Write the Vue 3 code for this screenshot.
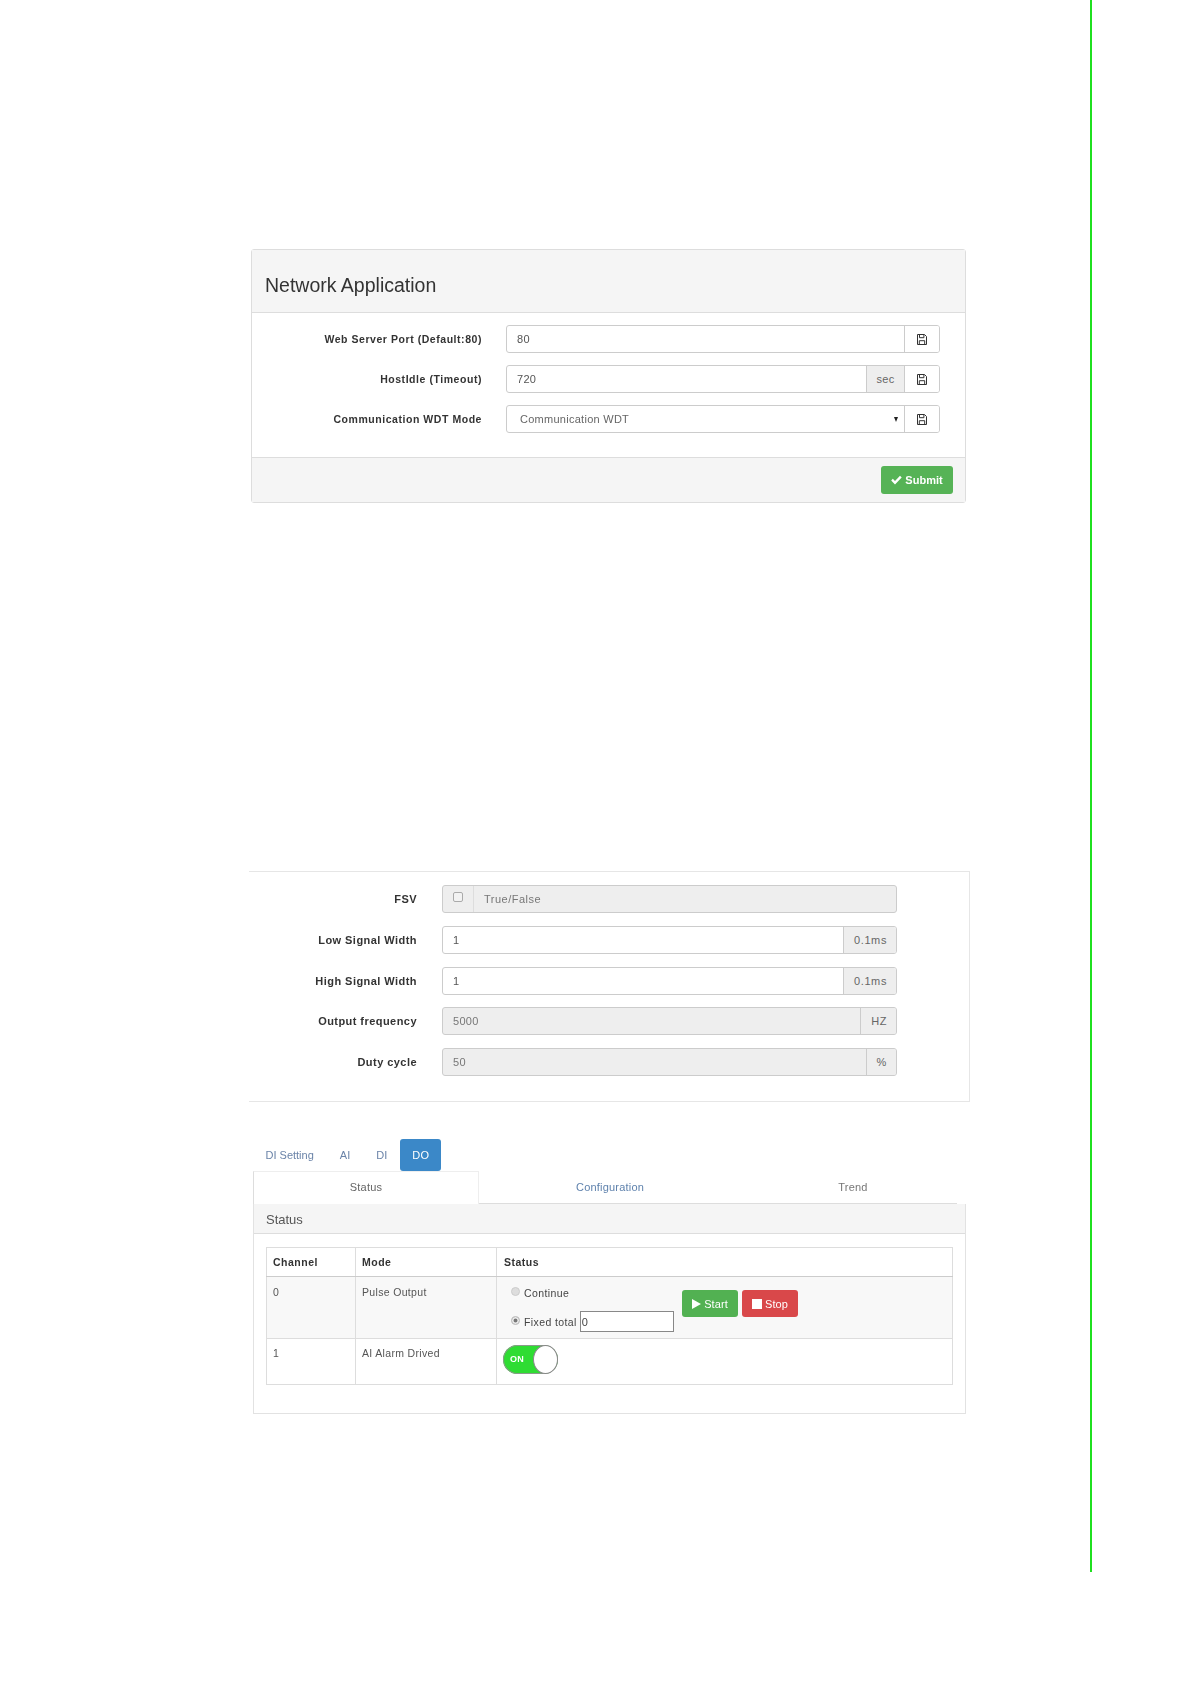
<script setup>
const networkRows = [
  { label: 'Web Server Port (Default:80)', value: '80' },
  { label: 'HostIdle (Timeout)', value: '720', unit: 'sec' },
  { label: 'Communication WDT Mode', select: 'Communication WDT' },
]
const signalRows = [
  { label: 'Low Signal Width', value: '1', unit: '0.1ms' },
  { label: 'High Signal Width', value: '1', unit: '0.1ms' },
  { label: 'Output frequency', value: '5000', unit: 'HZ', disabled: true },
  { label: 'Duty cycle', value: '50', unit: '%', disabled: true },
]
const topTabs = ['DI Setting', 'AI', 'DI', 'DO']
const subTabs = ['Status', 'Configuration', 'Trend']
</script>

<template>
  <div class="page">
    <main class="sheet">
      <section class="net-panel">
        <header class="net-head"><h2>Network Application</h2></header>
        <div class="net-body">
          <div v-for="row in networkRows" :key="row.label" class="net-row">
            <label class="field-label">{{ row.label }}</label>
            <div class="group">
              <div v-if="row.select" class="fake-select"><span>{{ row.select }}</span><i class="caret"></i></div>
              <input v-else class="field" :value="row.value" />
              <span v-if="row.unit" class="addon sec">{{ row.unit }}</span>
              <button class="save" type="button" aria-label="Save">
                <svg width="10" height="11" viewBox="0 0 10 11" fill="none" stroke="#333" stroke-width="1">
                  <path d="M.5.5h7l2 2v8H.5z" />
                  <path d="M2.5.7v3h4.4v-3M2.3 10.3V6.7h5.4v3.6" />
                </svg>
              </button>
            </div>
          </div>
        </div>
        <footer class="net-foot">
          <button class="btn ok" type="button">
            <svg width="11" height="10" viewBox="0 0 11 10"><path fill="#fff" d="M.2 5.4 1.8 3.8l2.2 2.2L9 .8l1.7 1.6L4 9.4z" /></svg>
            Submit
          </button>
        </footer>
      </section>

      <section class="signal-panel">
        <div class="signal-row">
          <label class="field-label">FSV</label>
          <div class="group muted">
            <span class="check-cell"><i class="check"></i></span>
            <span class="tf">True/False</span>
          </div>
        </div>
        <div v-for="row in signalRows" :key="row.label" class="signal-row">
          <label class="field-label">{{ row.label }}</label>
          <div class="group" :class="{ muted: row.disabled }">
            <input class="field" :value="row.value" :disabled="row.disabled" />
            <span class="addon end">{{ row.unit }}</span>
          </div>
        </div>
      </section>

      <nav class="pills">
        <a v-for="tab in topTabs" :key="tab" class="pill" :class="{ active: tab === 'DO' }">{{ tab }}</a>
      </nav>
      <nav class="sub-tabs">
        <a v-for="tab in subTabs" :key="tab" class="sub-tab" :class="{ active: tab === 'Status' }">{{ tab }}</a>
      </nav>

      <section class="status-panel">
        <header class="status-head">Status</header>
        <div class="status-body">
          <table class="status-table">
            <colgroup><col class="c1" /><col class="c2" /><col /></colgroup>
            <thead>
              <tr><th>Channel</th><th>Mode</th><th>Status</th></tr>
            </thead>
            <tbody>
              <tr class="striped">
                <td>0</td>
                <td>Pulse Output</td>
                <td class="ctl-cell">
                  <div class="controls">
                    <div class="radios">
                      <div class="radio-line first"><i class="radio"></i>Continue</div>
                      <div class="radio-line"><i class="radio on"></i>Fixed total<input class="total" value="0" /></div>
                    </div>
                    <button class="btn start action" type="button">
                      <svg width="9" height="10" viewBox="0 0 9 10"><path fill="#fff" d="M0 0l9 5-9 5z" /></svg>
                      Start
                    </button>
                    <button class="btn stop action" type="button">
                      <svg width="10" height="10" viewBox="0 0 10 10"><path fill="#fff" d="M0 0h10v10H0z" /></svg>
                      Stop
                    </button>
                  </div>
                </td>
              </tr>
              <tr class="plain">
                <td>1</td>
                <td>AI Alarm Drived</td>
                <td class="toggle-cell">
                  <div class="toggle"><span>ON</span><i class="knob"></i></div>
                </td>
              </tr>
            </tbody>
          </table>
        </div>
      </section>
    </main>
    <div class="edge"></div>
  </div>
</template>

<style>
html, body { margin: 0; background: #fff; }
</style>

<style scoped>
* { box-sizing: border-box; }
.page {
  width: 1190px;
  height: 1684px;
  display: flex;
  background: #fff;
  overflow: hidden;
  font-family: "Liberation Sans", Arial, sans-serif;
  font-size: 11px;
  color: #444;
}
.sheet { width: 1090px; flex: none; filter: blur(.3px); }
.edge { width: 2px; height: 1572px; background: #1fe01f; flex: none; }

.net-panel {
  margin: 249px 0 0 251px;
  width: 715px;
  height: 254px;
  border: 1px solid #ddd;
  border-radius: 3px;
  display: flex;
  flex-direction: column;
}
.net-head {
  height: 63px;
  padding: 24px 0 0 13px;
  background: #f5f5f5;
  border-bottom: 1px solid #ddd;
}
.net-head h2 {
  margin: 0;
  font-size: 19.5px;
  line-height: 22px;
  font-weight: 400;
  color: #333;
}
.net-body {
  flex: 1;
  padding: 12px 25px 0 0;
  display: flex;
  flex-direction: column;
  gap: 12px;
}
.net-row { display: grid; grid-template-columns: 230px 1fr; column-gap: 24px; align-items: center; }
.field-label {
  text-align: right;
  font-weight: 700;
  font-size: 10.5px;
  letter-spacing: .55px;
  color: #333;
}
.signal-row .field-label { font-size: 11px; letter-spacing: .45px; }
.group {
  display: flex;
  height: 28px;
  border: 1px solid #ccc;
  border-radius: 3px;
  background: #fff;
  overflow: hidden;
}
.field {
  flex: 1;
  min-width: 0;
  height: 100%;
  border: 0;
  outline: 0;
  padding: 0 9px 0 10px;
  font: 11px "Liberation Sans", Arial, sans-serif;
  letter-spacing: .3px;
  color: #555;
  background: transparent;
}
.field:disabled { color: #777; }
.fake-select {
  flex: 1;
  display: flex;
  align-items: center;
  justify-content: space-between;
  padding: 0 6px 0 13px;
  color: #666;
  letter-spacing: .27px;
}
.caret {
  width: 0;
  height: 0;
  border-left: 2.5px solid transparent;
  border-right: 2.5px solid transparent;
  border-top: 5px solid #222;
}
.addon {
  display: flex;
  align-items: center;
  justify-content: center;
  background: #eee;
  color: #666;
  border-left: 1px solid #ccc;
}
.addon.sec { width: 38px; letter-spacing: .3px; }
.addon.end { padding: 0 9px 0 10px; letter-spacing: .6px; }
.save {
  width: 35px;
  padding: 0;
  border: 0;
  border-left: 1px solid #ccc;
  background: #fff;
  display: flex;
  align-items: center;
  justify-content: center;
}
.net-foot {
  height: 45px;
  padding: 8px 12px 0 0;
  background: #f5f5f5;
  border-top: 1px solid #ddd;
  display: flex;
  justify-content: flex-end;
  align-items: flex-start;
}
.btn {
  height: 28px;
  border: 1px solid transparent;
  border-radius: 3px;
  color: #fff;
  font: 700 11px "Liberation Sans", Arial, sans-serif;
  display: inline-flex;
  align-items: center;
  justify-content: center;
  gap: 3px;
  padding: 0;
}
.btn.ok { background: #56b356; width: 72px; }
.btn.start { background: #52b152; }
.btn.stop { background: #d9484a; }
.btn.action { width: 56px; height: 27px; font-weight: 400; letter-spacing: .1px; }

.signal-panel {
  margin: 368px 0 0 249px;
  width: 721px;
  height: 231px;
  padding: 13px 72px 0 0;
  border: 1px solid #e6e6e6;
  border-left: 0;
  display: flex;
  flex-direction: column;
  gap: 12.75px;
}
.signal-row { display: grid; grid-template-columns: 168px 1fr; column-gap: 25px; align-items: center; }
.muted { background: #eee; }
.check-cell {
  width: 31px;
  border-right: 1px solid #ddd;
  display: flex;
  justify-content: center;
  padding-top: 6px;
}
.check {
  width: 10px;
  height: 10px;
  border: 1px solid #aaa;
  border-radius: 2px;
  background: #f2f2f2;
}
.tf { padding: 0 9px 0 10px; align-self: center; color: #777; letter-spacing: .5px; }

.pills { margin: 37px 0 0 252.5px; display: flex; height: 32px; }
.pill {
  display: flex;
  align-items: center;
  justify-content: center;
  color: #6a83a8;
  font-size: 11px;
  padding: 0 13px;
  border-radius: 3px;
}
.pill.active {
  width: 41px;
  padding: 0;
  background: #3b88c8;
  color: #fff;
  letter-spacing: .3px;
}
.sub-tabs {
  margin-left: 253px;
  width: 704px;
  height: 33px;
  display: grid;
  grid-template-columns: 226px 262px 216px;
  border-bottom: 1px solid #ddd;
}
.sub-tab {
  display: flex;
  align-items: center;
  justify-content: center;
  padding-bottom: 2px;
  color: #5f82ad;
  font-size: 11px;
  letter-spacing: .2px;
}
.sub-tab:last-child { color: #777; padding-left: 8px; }
.sub-tab.active {
  color: #666;
  height: 33px;
  background: #fff;
  border: 1px solid #eee;
  border-bottom: 0;
  border-left-color: #ddd;
}
.status-panel {
  margin-left: 253px;
  width: 713px;
  height: 210px;
  border: 1px solid #e2e2e2;
  border-top: 0;
}
.status-head {
  height: 30px;
  padding: 1px 0 0 12px;
  line-height: 30px;
  background: #f5f5f5;
  border-bottom: 1px solid #ddd;
  font-size: 13px;
  color: #555;
}
.status-body { padding: 13px 12px 0; }
.status-table {
  width: 100%;
  border-collapse: collapse;
  table-layout: fixed;
  font-size: 10.5px;
}
.c1 { width: 89px; }
.c2 { width: 141px; }
.status-table th,
.status-table td {
  border: 1px solid #ddd;
  text-align: left;
  vertical-align: top;
  padding: 0 6px 0 6px;
}
.status-table th {
  height: 29px;
  vertical-align: middle;
  font-weight: 700;
  color: #333;
  letter-spacing: .5px;
  border-bottom: 1px solid #ccc;
}
.status-table th:last-child { padding-left: 7px; }
.status-table td { color: #555; padding-top: 8px; letter-spacing: .33px; }
.striped td { background: #f8f8f8; height: 62px; padding-top: 9px; }
.plain td { height: 46px; }
.status-table td.ctl-cell { padding: 0 0 0 14px; }
.status-table td.toggle-cell { padding: 6px 0 0 6px; }
.controls { display: flex; align-items: flex-start; }
.radios { width: 171px; padding-top: 9px; }
.radio-line { display: flex; align-items: center; height: 14px; color: #444; white-space: nowrap; letter-spacing: .4px; }
.radio-line.first { margin-bottom: 11px; }
.radio-line:not(.first) { height: 21px; }
.radio {
  width: 9px;
  height: 9px;
  margin: -3px 4px 0 0;
  border-radius: 50%;
  background: #ddd;
  border: 1px solid #ccc;
  flex: none;
}
.radio.on { background: #777; box-shadow: inset 0 0 0 1.5px #eee; }
.total {
  width: 94px;
  height: 21px;
  margin-left: 3px;
  border: 1px solid #888;
  padding: 0 1px;
  font: 11px "Liberation Sans", Arial, sans-serif;
  color: #444;
  background: #fff;
}
.action { margin: 13px 4px 0 0; }
.toggle {
  width: 55px;
  height: 29px;
  border-radius: 15px;
  background: #2fdc33;
  box-shadow: inset 0 0 0 1px #8a9a8a;
  position: relative;
  color: #fff;
  font-weight: 700;
  font-size: 9px;
  line-height: 29px;
  padding-left: 7px;
}
.knob {
  position: absolute;
  right: 0;
  top: 0;
  width: 25px;
  height: 29px;
  border-radius: 50%;
  background: #fff;
  border: 1px solid #888;
}
</style>
